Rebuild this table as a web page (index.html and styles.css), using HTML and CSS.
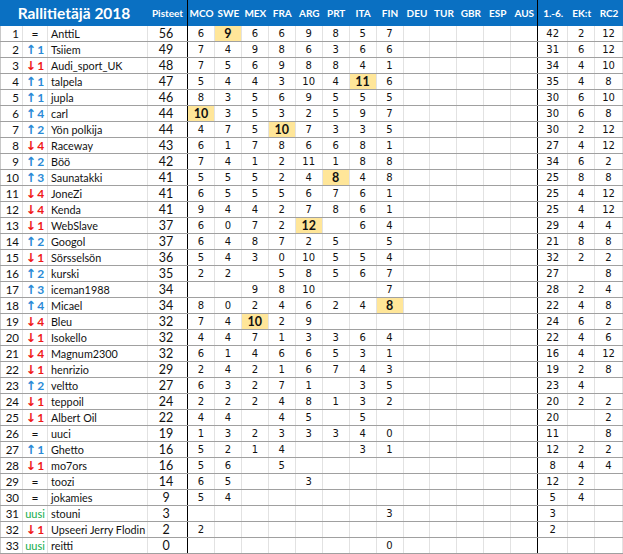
FILE: index.html
```html
<!DOCTYPE html>
<html lang="fi">
<head>
<meta charset="utf-8">
<title>Rallitietäjä 2018</title>
<link rel="stylesheet" href="styles.css">
</head>
<body>
<div class="sheet">
  <div class="head">
    <span class="title">Rallitietäjä 2018</span>
    <span class="hl pt">Pisteet</span>
    <span class="hl">MCO</span><span class="hl">SWE</span><span class="hl">MEX</span><span class="hl">FRA</span><span class="hl">ARG</span><span class="hl">PRT</span><span class="hl">ITA</span><span class="hl">FIN</span><span class="hl">DEU</span><span class="hl">TUR</span><span class="hl">GBR</span><span class="hl">ESP</span><span class="hl last">AUS</span>
    <span class="hl">1.-6.</span><span class="hl">EK:t</span><span class="hl">RC2</span>
  </div>

  <div class="row"><span class="rk">1</span><span class="ch eq">=</span><span class="nm">AnttiL</span><span class="pt">56</span><span class="s">6</span><span class="s hi">9</span><span class="s">6</span><span class="s">6</span><span class="s">9</span><span class="s">8</span><span class="s">5</span><span class="s">7</span><span class="s"></span><span class="s"></span><span class="s"></span><span class="s"></span><span class="s last"></span><span class="t">42</span><span class="t">2</span><span class="t">12</span></div>
  <div class="row"><span class="rk">2</span><span class="ch up"><span class="ar">↑</span>1</span><span class="nm">Tsiiem</span><span class="pt">49</span><span class="s">7</span><span class="s">4</span><span class="s">9</span><span class="s">8</span><span class="s">6</span><span class="s">3</span><span class="s">6</span><span class="s">6</span><span class="s"></span><span class="s"></span><span class="s"></span><span class="s"></span><span class="s last"></span><span class="t">31</span><span class="t">6</span><span class="t">12</span></div>
  <div class="row"><span class="rk">3</span><span class="ch dn"><span class="ar">↓</span>1</span><span class="nm">Audi_sport_UK</span><span class="pt">48</span><span class="s">7</span><span class="s">5</span><span class="s">6</span><span class="s">9</span><span class="s">8</span><span class="s">8</span><span class="s">4</span><span class="s">1</span><span class="s"></span><span class="s"></span><span class="s"></span><span class="s"></span><span class="s last"></span><span class="t">34</span><span class="t">4</span><span class="t">10</span></div>
  <div class="row"><span class="rk">4</span><span class="ch up"><span class="ar">↑</span>1</span><span class="nm">talpela</span><span class="pt">47</span><span class="s">5</span><span class="s">4</span><span class="s">4</span><span class="s">3</span><span class="s">10</span><span class="s">4</span><span class="s hi">11</span><span class="s">6</span><span class="s"></span><span class="s"></span><span class="s"></span><span class="s"></span><span class="s last"></span><span class="t">35</span><span class="t">4</span><span class="t">8</span></div>
  <div class="row"><span class="rk">5</span><span class="ch up"><span class="ar">↑</span>1</span><span class="nm">jupla</span><span class="pt">46</span><span class="s">8</span><span class="s">3</span><span class="s">5</span><span class="s">6</span><span class="s">9</span><span class="s">5</span><span class="s">5</span><span class="s">5</span><span class="s"></span><span class="s"></span><span class="s"></span><span class="s"></span><span class="s last"></span><span class="t">30</span><span class="t">6</span><span class="t">10</span></div>
  <div class="row"><span class="rk">6</span><span class="ch up"><span class="ar">↑</span>4</span><span class="nm">carl</span><span class="pt">44</span><span class="s hi">10</span><span class="s">3</span><span class="s">5</span><span class="s">3</span><span class="s">2</span><span class="s">5</span><span class="s">9</span><span class="s">7</span><span class="s"></span><span class="s"></span><span class="s"></span><span class="s"></span><span class="s last"></span><span class="t">30</span><span class="t">6</span><span class="t">8</span></div>
  <div class="row"><span class="rk">7</span><span class="ch up"><span class="ar">↑</span>2</span><span class="nm">Yön polkija</span><span class="pt">44</span><span class="s">4</span><span class="s">7</span><span class="s">5</span><span class="s hi">10</span><span class="s">7</span><span class="s">3</span><span class="s">3</span><span class="s">5</span><span class="s"></span><span class="s"></span><span class="s"></span><span class="s"></span><span class="s last"></span><span class="t">30</span><span class="t">2</span><span class="t">12</span></div>
  <div class="row"><span class="rk">8</span><span class="ch dn"><span class="ar">↓</span>4</span><span class="nm">Raceway</span><span class="pt">43</span><span class="s">6</span><span class="s">1</span><span class="s">7</span><span class="s">8</span><span class="s">6</span><span class="s">6</span><span class="s">8</span><span class="s">1</span><span class="s"></span><span class="s"></span><span class="s"></span><span class="s"></span><span class="s last"></span><span class="t">27</span><span class="t">4</span><span class="t">12</span></div>
  <div class="row"><span class="rk">9</span><span class="ch up"><span class="ar">↑</span>2</span><span class="nm">Böö</span><span class="pt">42</span><span class="s">7</span><span class="s">4</span><span class="s">1</span><span class="s">2</span><span class="s">11</span><span class="s">1</span><span class="s">8</span><span class="s">8</span><span class="s"></span><span class="s"></span><span class="s"></span><span class="s"></span><span class="s last"></span><span class="t">34</span><span class="t">6</span><span class="t">2</span></div>
  <div class="row"><span class="rk">10</span><span class="ch up"><span class="ar">↑</span>3</span><span class="nm">Saunatakki</span><span class="pt">41</span><span class="s">5</span><span class="s">5</span><span class="s">5</span><span class="s">2</span><span class="s">4</span><span class="s hi">8</span><span class="s">4</span><span class="s">8</span><span class="s"></span><span class="s"></span><span class="s"></span><span class="s"></span><span class="s last"></span><span class="t">25</span><span class="t">8</span><span class="t">8</span></div>
  <div class="row"><span class="rk">11</span><span class="ch dn"><span class="ar">↓</span>4</span><span class="nm">JoneZi</span><span class="pt">41</span><span class="s">6</span><span class="s">5</span><span class="s">5</span><span class="s">5</span><span class="s">6</span><span class="s">7</span><span class="s">6</span><span class="s">1</span><span class="s"></span><span class="s"></span><span class="s"></span><span class="s"></span><span class="s last"></span><span class="t">25</span><span class="t">4</span><span class="t">12</span></div>
  <div class="row"><span class="rk">12</span><span class="ch dn"><span class="ar">↓</span>4</span><span class="nm">Kenda</span><span class="pt">41</span><span class="s">9</span><span class="s">4</span><span class="s">4</span><span class="s">2</span><span class="s">7</span><span class="s">8</span><span class="s">6</span><span class="s">1</span><span class="s"></span><span class="s"></span><span class="s"></span><span class="s"></span><span class="s last"></span><span class="t">25</span><span class="t">4</span><span class="t">12</span></div>
  <div class="row"><span class="rk">13</span><span class="ch dn"><span class="ar">↓</span>1</span><span class="nm">WebSlave</span><span class="pt">37</span><span class="s">6</span><span class="s">0</span><span class="s">7</span><span class="s">2</span><span class="s hi">12</span><span class="s"></span><span class="s">6</span><span class="s">4</span><span class="s"></span><span class="s"></span><span class="s"></span><span class="s"></span><span class="s last"></span><span class="t">29</span><span class="t">4</span><span class="t">4</span></div>
  <div class="row"><span class="rk">14</span><span class="ch up"><span class="ar">↑</span>2</span><span class="nm">Googol</span><span class="pt">37</span><span class="s">6</span><span class="s">4</span><span class="s">8</span><span class="s">7</span><span class="s">2</span><span class="s">5</span><span class="s"></span><span class="s">5</span><span class="s"></span><span class="s"></span><span class="s"></span><span class="s"></span><span class="s last"></span><span class="t">21</span><span class="t">8</span><span class="t">8</span></div>
  <div class="row"><span class="rk">15</span><span class="ch dn"><span class="ar">↓</span>1</span><span class="nm">Sörsselsön</span><span class="pt">36</span><span class="s">5</span><span class="s">4</span><span class="s">3</span><span class="s">0</span><span class="s">10</span><span class="s">5</span><span class="s">5</span><span class="s">4</span><span class="s"></span><span class="s"></span><span class="s"></span><span class="s"></span><span class="s last"></span><span class="t">32</span><span class="t">2</span><span class="t">2</span></div>
  <div class="row"><span class="rk">16</span><span class="ch up"><span class="ar">↑</span>2</span><span class="nm">kurski</span><span class="pt">35</span><span class="s">2</span><span class="s">2</span><span class="s"></span><span class="s">5</span><span class="s">8</span><span class="s">5</span><span class="s">6</span><span class="s">7</span><span class="s"></span><span class="s"></span><span class="s"></span><span class="s"></span><span class="s last"></span><span class="t">27</span><span class="t"></span><span class="t">8</span></div>
  <div class="row"><span class="rk">17</span><span class="ch up"><span class="ar">↑</span>3</span><span class="nm">iceman1988</span><span class="pt">34</span><span class="s"></span><span class="s"></span><span class="s">9</span><span class="s">8</span><span class="s">10</span><span class="s"></span><span class="s"></span><span class="s">7</span><span class="s"></span><span class="s"></span><span class="s"></span><span class="s"></span><span class="s last"></span><span class="t">28</span><span class="t">2</span><span class="t">4</span></div>
  <div class="row"><span class="rk">18</span><span class="ch up"><span class="ar">↑</span>4</span><span class="nm">Micael</span><span class="pt">34</span><span class="s">8</span><span class="s">0</span><span class="s">2</span><span class="s">4</span><span class="s">6</span><span class="s">2</span><span class="s">4</span><span class="s hi">8</span><span class="s"></span><span class="s"></span><span class="s"></span><span class="s"></span><span class="s last"></span><span class="t">22</span><span class="t">4</span><span class="t">8</span></div>
  <div class="row"><span class="rk">19</span><span class="ch dn"><span class="ar">↓</span>4</span><span class="nm">Bleu</span><span class="pt">32</span><span class="s">7</span><span class="s">4</span><span class="s hi">10</span><span class="s">2</span><span class="s">9</span><span class="s"></span><span class="s"></span><span class="s"></span><span class="s"></span><span class="s"></span><span class="s"></span><span class="s"></span><span class="s last"></span><span class="t">24</span><span class="t">6</span><span class="t">2</span></div>
  <div class="row"><span class="rk">20</span><span class="ch dn"><span class="ar">↓</span>1</span><span class="nm">Isokello</span><span class="pt">32</span><span class="s">4</span><span class="s">4</span><span class="s">7</span><span class="s">1</span><span class="s">3</span><span class="s">3</span><span class="s">6</span><span class="s">4</span><span class="s"></span><span class="s"></span><span class="s"></span><span class="s"></span><span class="s last"></span><span class="t">22</span><span class="t">4</span><span class="t">6</span></div>
  <div class="row"><span class="rk">21</span><span class="ch dn"><span class="ar">↓</span>4</span><span class="nm">Magnum2300</span><span class="pt">32</span><span class="s">6</span><span class="s">1</span><span class="s">4</span><span class="s">6</span><span class="s">6</span><span class="s">5</span><span class="s">3</span><span class="s">1</span><span class="s"></span><span class="s"></span><span class="s"></span><span class="s"></span><span class="s last"></span><span class="t">16</span><span class="t">4</span><span class="t">12</span></div>
  <div class="row"><span class="rk">22</span><span class="ch dn"><span class="ar">↓</span>1</span><span class="nm">henrizio</span><span class="pt">29</span><span class="s">2</span><span class="s">4</span><span class="s">2</span><span class="s">1</span><span class="s">6</span><span class="s">7</span><span class="s">4</span><span class="s">3</span><span class="s"></span><span class="s"></span><span class="s"></span><span class="s"></span><span class="s last"></span><span class="t">19</span><span class="t">2</span><span class="t">8</span></div>
  <div class="row"><span class="rk">23</span><span class="ch up"><span class="ar">↑</span>2</span><span class="nm">veltto</span><span class="pt">27</span><span class="s">6</span><span class="s">3</span><span class="s">2</span><span class="s">7</span><span class="s">1</span><span class="s"></span><span class="s">3</span><span class="s">5</span><span class="s"></span><span class="s"></span><span class="s"></span><span class="s"></span><span class="s last"></span><span class="t">23</span><span class="t">4</span><span class="t"></span></div>
  <div class="row"><span class="rk">24</span><span class="ch dn"><span class="ar">↓</span>1</span><span class="nm">teppoil</span><span class="pt">24</span><span class="s">2</span><span class="s">2</span><span class="s">2</span><span class="s">4</span><span class="s">8</span><span class="s">1</span><span class="s">3</span><span class="s">2</span><span class="s"></span><span class="s"></span><span class="s"></span><span class="s"></span><span class="s last"></span><span class="t">20</span><span class="t">2</span><span class="t">2</span></div>
  <div class="row"><span class="rk">25</span><span class="ch dn"><span class="ar">↓</span>1</span><span class="nm">Albert Oil</span><span class="pt">22</span><span class="s">4</span><span class="s">4</span><span class="s"></span><span class="s">4</span><span class="s">5</span><span class="s"></span><span class="s">5</span><span class="s"></span><span class="s"></span><span class="s"></span><span class="s"></span><span class="s"></span><span class="s last"></span><span class="t">20</span><span class="t"></span><span class="t">2</span></div>
  <div class="row"><span class="rk">26</span><span class="ch eq">=</span><span class="nm">uuci</span><span class="pt">19</span><span class="s">1</span><span class="s">3</span><span class="s">2</span><span class="s">3</span><span class="s">3</span><span class="s">3</span><span class="s">4</span><span class="s">0</span><span class="s"></span><span class="s"></span><span class="s"></span><span class="s"></span><span class="s last"></span><span class="t">11</span><span class="t"></span><span class="t">8</span></div>
  <div class="row"><span class="rk">27</span><span class="ch up"><span class="ar">↑</span>1</span><span class="nm">Ghetto</span><span class="pt">16</span><span class="s">5</span><span class="s">2</span><span class="s">1</span><span class="s">4</span><span class="s"></span><span class="s"></span><span class="s">3</span><span class="s">1</span><span class="s"></span><span class="s"></span><span class="s"></span><span class="s"></span><span class="s last"></span><span class="t">12</span><span class="t">2</span><span class="t">2</span></div>
  <div class="row"><span class="rk">28</span><span class="ch dn"><span class="ar">↓</span>1</span><span class="nm">mo7ors</span><span class="pt">16</span><span class="s">5</span><span class="s">6</span><span class="s"></span><span class="s">5</span><span class="s"></span><span class="s"></span><span class="s"></span><span class="s"></span><span class="s"></span><span class="s"></span><span class="s"></span><span class="s"></span><span class="s last"></span><span class="t">8</span><span class="t">4</span><span class="t">4</span></div>
  <div class="row"><span class="rk">29</span><span class="ch eq">=</span><span class="nm">toozi</span><span class="pt">14</span><span class="s">6</span><span class="s">5</span><span class="s"></span><span class="s"></span><span class="s">3</span><span class="s"></span><span class="s"></span><span class="s"></span><span class="s"></span><span class="s"></span><span class="s"></span><span class="s"></span><span class="s last"></span><span class="t">12</span><span class="t">2</span><span class="t"></span></div>
  <div class="row"><span class="rk">30</span><span class="ch eq">=</span><span class="nm">jokamies</span><span class="pt">9</span><span class="s">5</span><span class="s">4</span><span class="s"></span><span class="s"></span><span class="s"></span><span class="s"></span><span class="s"></span><span class="s"></span><span class="s"></span><span class="s"></span><span class="s"></span><span class="s"></span><span class="s last"></span><span class="t">5</span><span class="t">4</span><span class="t"></span></div>
  <div class="row"><span class="rk">31</span><span class="ch new">uusi</span><span class="nm">stouni</span><span class="pt">3</span><span class="s"></span><span class="s"></span><span class="s"></span><span class="s"></span><span class="s"></span><span class="s"></span><span class="s"></span><span class="s">3</span><span class="s"></span><span class="s"></span><span class="s"></span><span class="s"></span><span class="s last"></span><span class="t">3</span><span class="t"></span><span class="t"></span></div>
  <div class="row"><span class="rk">32</span><span class="ch dn"><span class="ar">↓</span>1</span><span class="nm">Upseeri Jerry Flodin</span><span class="pt">2</span><span class="s">2</span><span class="s"></span><span class="s"></span><span class="s"></span><span class="s"></span><span class="s"></span><span class="s"></span><span class="s"></span><span class="s"></span><span class="s"></span><span class="s"></span><span class="s"></span><span class="s last"></span><span class="t">2</span><span class="t"></span><span class="t"></span></div>
  <div class="row"><span class="rk">33</span><span class="ch new">uusi</span><span class="nm">reitti</span><span class="pt">0</span><span class="s"></span><span class="s"></span><span class="s"></span><span class="s"></span><span class="s"></span><span class="s"></span><span class="s"></span><span class="s">0</span><span class="s"></span><span class="s"></span><span class="s"></span><span class="s"></span><span class="s last"></span><span class="t"></span><span class="t"></span><span class="t"></span></div>
</div>
</body>
</html>
```

FILE: styles.css
```css
html, body {
  margin: 0;
  padding: 0;
  background: #ffffff;
}

.sheet {
  width: 623px;
  font-family: Lato, "Liberation Sans", sans-serif;
  color: #111111;
}

.head {
  display: grid;
  grid-template-columns: 148px 40px repeat(13, 26.95px) 30px 27px 27.65px;
  height: 26px;
  background: #0a70c2;
  color: #ffffff;
  font-weight: 700;
}

.title {
  display: flex;
  align-items: center;
  justify-content: center;
  font-size: 15.5px;
  padding-bottom: 1px;
}

.hl {
  display: flex;
  align-items: center;
  justify-content: center;
  font-size: 10px;
  white-space: nowrap;
  box-sizing: border-box;
}

.hl.pt,
.hl.last {
  border-right: 1px solid #000000;
}

.row {
  display: grid;
  grid-template-columns: 23px 25px 100px 40px repeat(13, 26.95px) 30px 27px 27.65px;
  height: 16px;
  box-sizing: border-box;
  border-bottom: 1px solid #a0a0a0;
}

.row > span {
  display: flex;
  align-items: center;
  box-sizing: border-box;
  border-right: 1px solid #e2e2e2;
  white-space: nowrap;
  overflow: hidden;
}

.rk {
  justify-content: flex-end;
  padding-right: 3px;
  font-size: 11.5px;
  border-left: 1px solid #c8c8c8;
}

.ch {
  justify-content: center;
  font-size: 12px;
  font-weight: 700;
}

.ch .ar {
  font-family: "DejaVu Sans", sans-serif;
  font-weight: 700;
  font-size: 12.5px;
  margin-right: 1px;
}

.ch.up { color: #2a8ad6; }
.ch.dn { color: #f01818; }
.ch.eq { color: #111111; font-weight: 400; }
.ch.new { color: #12ac4a; font-weight: 400; font-size: 11px; }

.row > .nm {
  padding-left: 3px;
  font-size: 10.8px;
  overflow: visible;
}

.row > .pt {
  justify-content: center;
  font-size: 12.5px;
  border-right: 1px solid #000000;
  padding-right: 3px;
}

.s,
.t {
  justify-content: center;
  font-family: "DejaVu Sans", sans-serif;
  font-size: 10px;
}

.row > .s.last {
  border-right: 1px solid #000000;
}

.s.hi {
  background: #ffe699;
  font-family: Lato, "Liberation Sans", sans-serif;
  font-weight: 700;
  font-size: 12.5px;
}
```
